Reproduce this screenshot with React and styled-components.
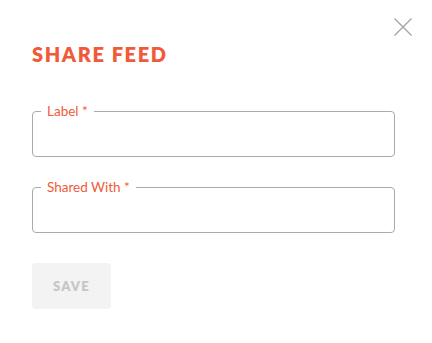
import React from 'react';
import styled, { createGlobalStyle } from 'styled-components';

const GlobalStyle = createGlobalStyle`
    body {
        margin: 0;
        background: #ffffff;
        font-family: Lato, "Open Sans", sans-serif;
    }
`;

const Dialog = styled.div`
    position: relative;
    width: 432px;
    height: 343px;
    box-sizing: border-box;
    padding: 42px 37px 0 32px;
    background: #ffffff;
`;

const CloseButton = styled.button`
    position: absolute;
    top: 17px;
    right: 19px;
    width: 20px;
    height: 20px;
    padding: 0;
    border: none;
    background: none;
    cursor: pointer;
`;

const Title = styled.h2`
    margin: 0 0 37px 0;
    font-size: 20px;
    line-height: 24px;
    font-weight: 800;
    letter-spacing: 1.6px;
    color: #f05a38;
`;

const Form = styled.form`
    display: flex;
    flex-direction: column;
    gap: 22px;
`;

const Field = styled.fieldset`
    margin: 0;
    padding: 0 8px;
    height: 54px;
    box-sizing: border-box;
    border: 1px solid #a4adaa;
    border-radius: 4px;
`;

const Legend = styled.legend`
    margin-left: 0;
    padding: 0 6px;
    font-size: 13.5px;
    line-height: 16px;
    color: #f05a38;
`;

const Input = styled.input`
    width: 100%;
    height: 30px;
    border: none;
    outline: none;
    background: transparent;
    font: inherit;
`;

const SaveButton = styled.button`
    margin-top: 8px;
    width: 79px;
    height: 46px;
    border: none;
    border-radius: 4px;
    background: #f3f3f3;
    color: #c6c6c6;
    font-family: Lato, sans-serif;
    font-size: 13px;
    font-weight: 800;
    letter-spacing: 1.2px;
`;

const App = () => (
    <>
        <GlobalStyle />
        <Dialog>
            <CloseButton aria-label="close">
                <svg width="20" height="20" viewBox="0 0 20 20">
                    <path d="M1.5 1.5L18.5 18.5M18.5 1.5L1.5 18.5" stroke="#a3a3a3" strokeWidth="1.3" fill="none" />
                </svg>
            </CloseButton>
            <Title>SHARE FEED</Title>
            <Form>
                <Field>
                    <Legend>Label *</Legend>
                    <Input />
                </Field>
                <Field>
                    <Legend>Shared With *</Legend>
                    <Input />
                </Field>
                <div>
                    <SaveButton type="button" disabled>SAVE</SaveButton>
                </div>
            </Form>
        </Dialog>
    </>
);

export default App;
